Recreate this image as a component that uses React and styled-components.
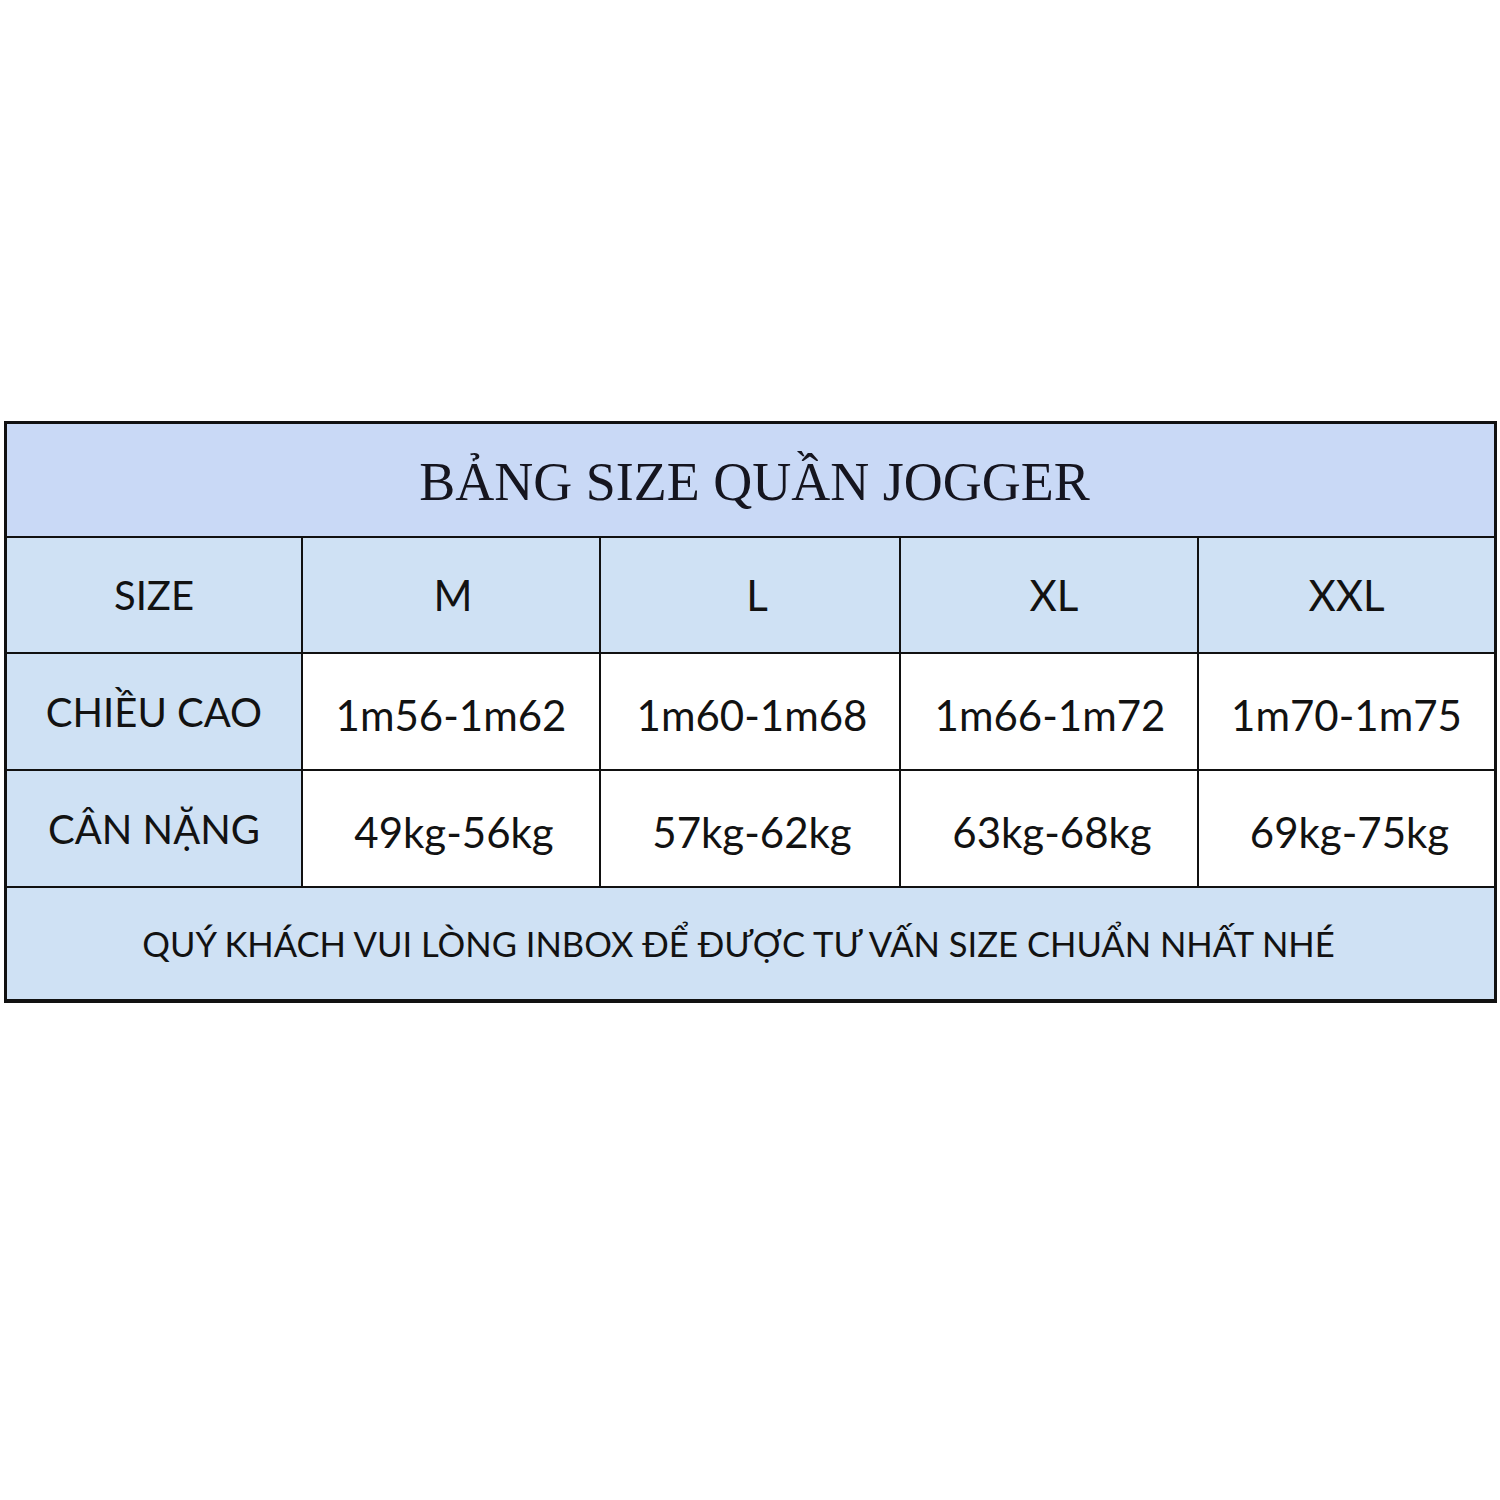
import React from "react";
import styled, { createGlobalStyle } from "styled-components";

const Global = createGlobalStyle`
  html, body { margin: 0; padding: 0; background: #ffffff; }
  body { font-family: Lato, "Open Sans", sans-serif; color: #111; }
`;

const Page = styled.div`
  width: 1500px;
  height: 1500px;
  padding: 421px 0 0 4px;
  box-sizing: border-box;
`;

const Frame = styled.div`
  width: 1493px;
  box-sizing: border-box;
  border-style: solid;
  border-color: #111111;
  border-width: 3px 3px 4px 3px;
  background: #ffffff;
`;

const TitleRow = styled.div`
  height: 114px;
  display: flex;
  align-items: center;
  justify-content: center;
  padding: 4px 0 0 8px;
  box-sizing: border-box;
  background: #c9d9f6;
  border-bottom: 2px solid #111111;
  font-family: "Liberation Serif", "DejaVu Serif", serif;
  font-size: 54px;
  color: #15151f;
`;

const Row = styled.div`
  display: grid;
  grid-template-columns: 296px 298px 300px 298px 1fr;
  height: ${(p) => p.$h}px;
  box-sizing: border-box;
  border-bottom: 2px solid #111111;
`;

const Cell = styled.div`
  display: flex;
  align-items: center;
  justify-content: center;
  background: ${(p) => (p.$shaded ? "#cfe1f4" : "#ffffff")};
  border-right: ${(p) => (p.$last ? "none" : "2px solid #111111")};
  font-size: ${(p) => (p.$label ? 40 : 42)}px;
  color: #121212;
  padding-top: ${(p) => (p.$header ? 0 : 6)}px;
  padding-left: ${(p) => p.$dx || 0}px;
  box-sizing: border-box;
`;

const Footer = styled.div`
  height: 111px;
  display: flex;
  align-items: center;
  justify-content: center;
  background: #cfe1f4;
  font-size: 34.6px;
  color: #121212;
  padding-right: 24px;
  box-sizing: border-box;
`;

const rows = [
  { label: "SIZE", values: ["M", "L", "XL", "XXL"], header: true, h: 116, dx: [4, 14, 10, -4] },
  {
    label: "CHIỀU CAO",
    values: ["1m56-1m62", "1m60-1m68", "1m66-1m72", "1m70-1m75"],
    h: 117,
    dx: [0, 4, 2, -8],
  },
  {
    label: "CÂN NẶNG",
    values: ["49kg-56kg", "57kg-62kg", "63kg-68kg", "69kg-75kg"],
    h: 117,
    dx: [6, 4, 6, 6],
  },
];

export default function App() {
  return (
    <Page>
      <Global />
      <Frame>
        <TitleRow>BẢNG SIZE QUẦN JOGGER</TitleRow>
        {rows.map((r) => (
          <Row key={r.label} $h={r.h}>
            <Cell $shaded $header $label $dx={r.header ? -8 : 0}>
              {r.label}
            </Cell>
            {r.values.map((v, i) => (
              <Cell
                key={v}
                $shaded={r.header}
                $header={r.header}
                $dx={r.dx[i]}
                $last={i === r.values.length - 1}
              >
                {v}
              </Cell>
            ))}
          </Row>
        ))}
        <Footer>QUÝ KHÁCH VUI LÒNG INBOX ĐỂ ĐƯỢC TƯ VẤN SIZE CHUẨN NHẤT NHÉ</Footer>
      </Frame>
    </Page>
  );
}
